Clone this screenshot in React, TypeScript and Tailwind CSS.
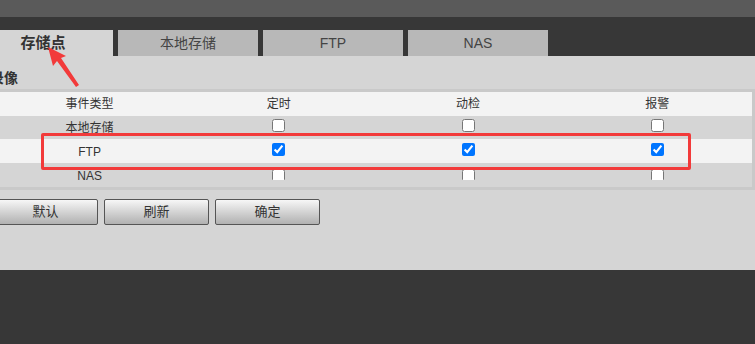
const font = "font-['Liberation_Sans','Noto_Sans_CJK_SC',sans-serif]";

const tabs = [
  { name: "存储点", active: true },
  { name: "本地存储", active: false },
  { name: "FTP", active: false },
  { name: "NAS", active: false },
];

const rows = [
  { name: "本地存储", checked: false, bg: "bg-[#d5d5d5]", h: "h-[23px]" },
  { name: "FTP", checked: true, bg: "bg-[#f3f3f3]", h: "h-[24px]" },
  { name: "NAS", checked: false, bg: "bg-[#d5d5d5]", h: "h-[24px]", clip: true },
];

function Box({ checked, clip }: { checked: boolean; clip?: boolean }) {
  return (
    <span
      className={
        clip
          ? "mb-[1px] flex h-[11px] items-start overflow-hidden"
          : "mb-[4px] flex h-[13px] items-start"
      }
    >
      <input
        type="checkbox"
        defaultChecked={checked}
        className="m-0 h-[13px] w-[13px]"
      />
    </span>
  );
}

export default function App() {
  return (
    <div
      className={`relative h-[344px] w-[755px] overflow-hidden bg-[#373737] ${font}`}
    >
      <div className="h-[17px] bg-[#5a5a5a]" />
      <div className="mt-[13px] ml-[-27px] flex h-[26px] gap-[5px]">
        {tabs.map((t) => (
          <div
            key={t.name}
            className={
              t.active
                ? "flex w-[140px] shrink-0 items-center justify-center bg-[#d5d5d5] text-[15px] font-bold text-[#333]"
                : "flex w-[140px] shrink-0 items-center justify-center bg-[#b8b8b8] text-[14px] text-[#444]"
            }
          >
            {t.name}
          </div>
        ))}
      </div>
      <div className="h-[214px] bg-[#d5d5d5] pt-[12px]">
        <div className="ml-[-10px] h-[20px] text-[14px] leading-[20px] font-bold text-[#333]">
          录像
        </div>
        <div className="mt-[1px] ml-[-8px] w-[763px] border-[3px] border-[#c9c9c9] text-[12px] text-[#333]">
          <div className="grid h-[24px] grid-cols-4 items-center bg-[#f3f3f3] text-center">
            <div>事件类型</div>
            <div>定时</div>
            <div>动检</div>
            <div>报警</div>
          </div>
          {rows.map((r) => (
            <div key={r.name} className={`grid grid-cols-4 ${r.h} ${r.bg}`}>
              <div className="flex items-center justify-center pt-[1px]">
                {r.name}
              </div>
              {[0, 1, 2].map((i) => (
                <div key={i} className="flex items-center justify-center">
                  <Box checked={r.checked} clip={r.clip} />
                </div>
              ))}
            </div>
          ))}
        </div>
        <div className="mt-[9px] ml-[-7px] flex gap-[6px]">
          {["默认", "刷新", "确定"].map((b) => (
            <button
              key={b}
              className="h-[26px] w-[105px] rounded-[2px] border border-[#555] bg-gradient-to-b from-[#f7f7f7] to-[#b1b1b1] text-[13px] text-[#333]"
            >
              {b}
            </button>
          ))}
        </div>
      </div>

      {/* annotation overlays */}
      <div className="absolute top-[133px] left-[41px] h-[37px] w-[650px] rounded-[2px] border-[3px] border-[#f23a3a]" />
      <svg
        className="absolute top-0 left-0"
        width="100"
        height="100"
        viewBox="0 0 100 100"
      >
        <polygon
          points="48,47 66,56 61,58 79,85 76,87 57,61 53,66"
          fill="#f23a3a"
        />
      </svg>
    </div>
  );
}
